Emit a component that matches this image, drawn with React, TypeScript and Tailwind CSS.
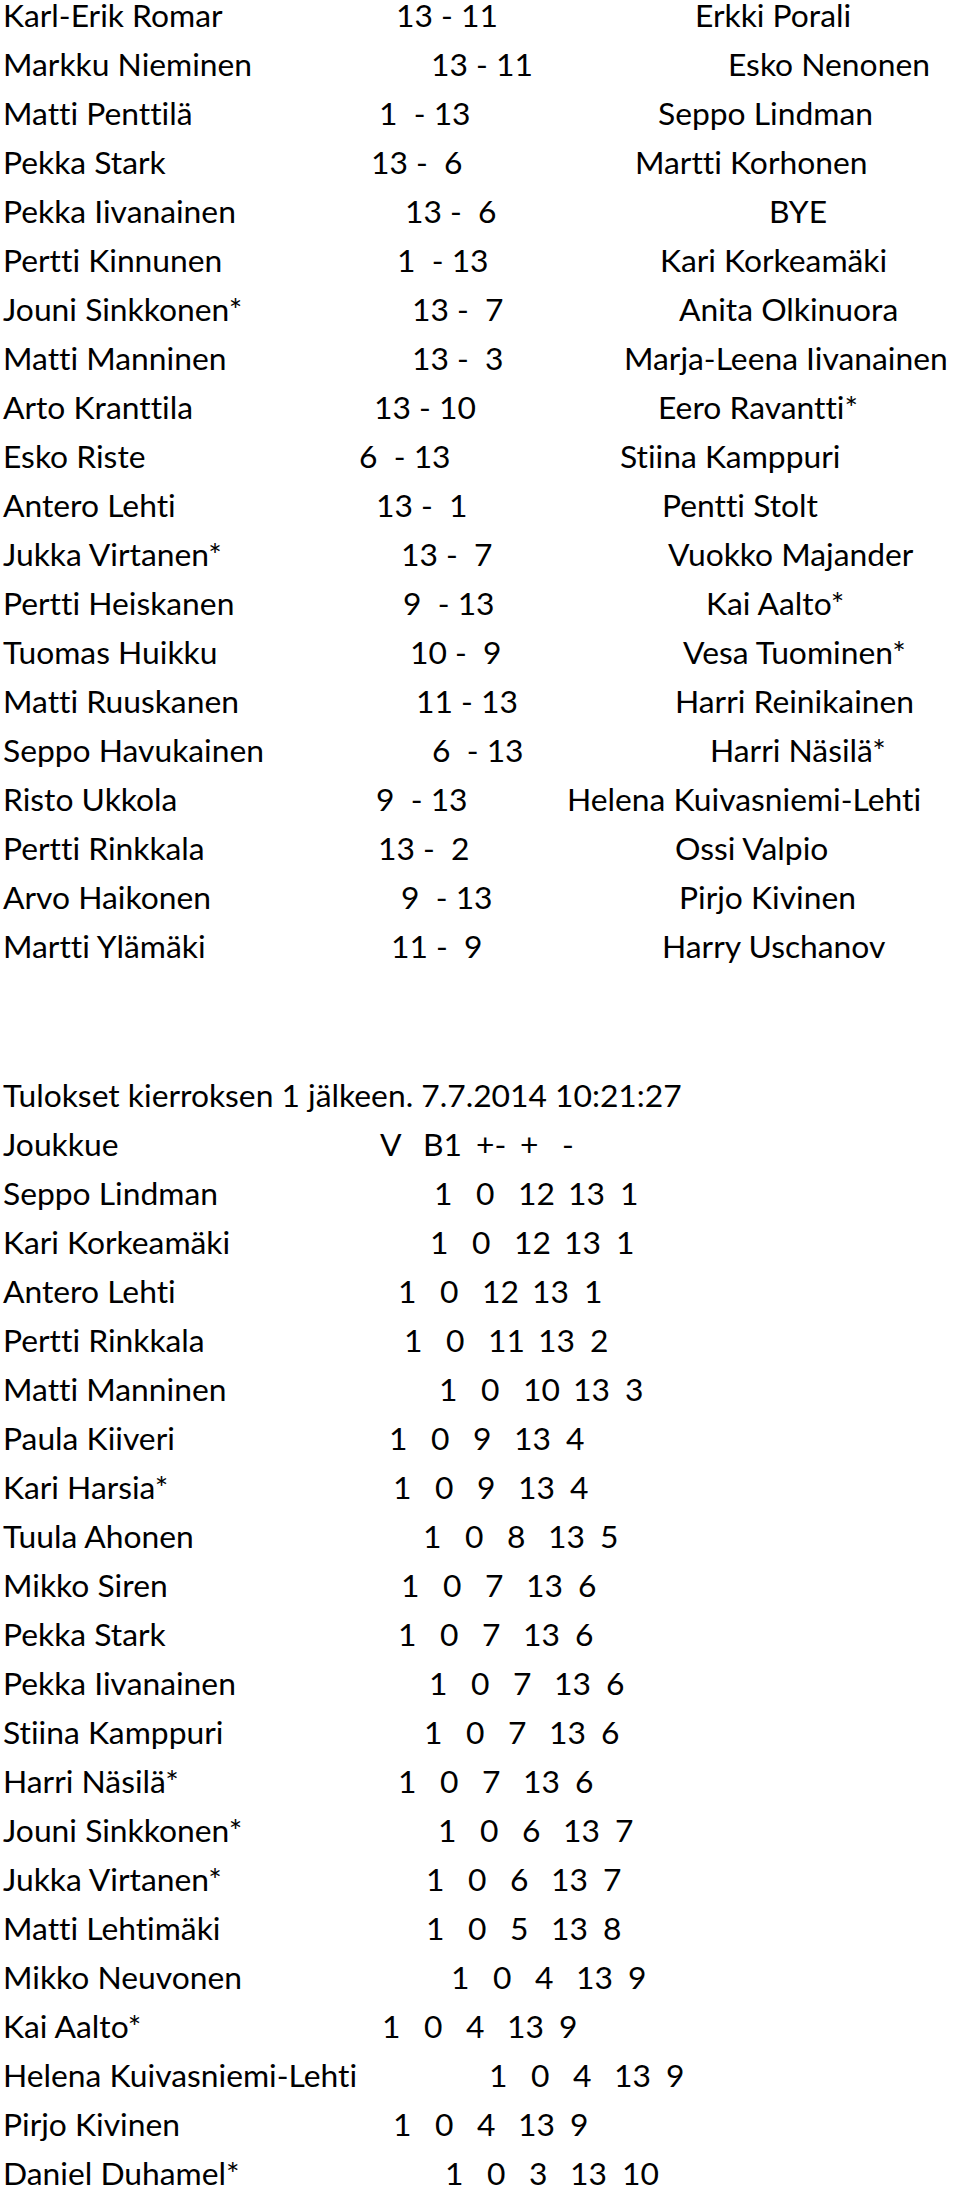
import React from "react";

type TopRow = { l: string; s: string; r: string; a: string; b: string };

const top: TopRow[] = [
  { l: "Karl-Erik Romar", s: "13 - 11", r: "Erkki Porali", a: "w-[396px]", b: "w-[299px]" },
  { l: "Markku Nieminen", s: "13 - 11", r: "Esko Nenonen", a: "w-[431px]", b: "w-[297px]" },
  { l: "Matti Penttilä", s: "1  - 13", r: "Seppo Lindman", a: "w-[379px]", b: "w-[279px]" },
  { l: "Pekka Stark", s: "13 -  6", r: "Martti Korhonen", a: "w-[371px]", b: "w-[264px]" },
  { l: "Pekka Iivanainen", s: "13 -  6", r: "BYE", a: "w-[405px]", b: "w-[364px]" },
  { l: "Pertti Kinnunen", s: "1  - 13", r: "Kari Korkeamäki", a: "w-[397px]", b: "w-[263px]" },
  { l: "Jouni Sinkkonen*", s: "13 -  7", r: "Anita Olkinuora", a: "w-[412px]", b: "w-[267px]" },
  { l: "Matti Manninen", s: "13 -  3", r: "Marja-Leena Iivanainen", a: "w-[412px]", b: "w-[212px]" },
  { l: "Arto Kranttila", s: "13 - 10", r: "Eero Ravantti*", a: "w-[374px]", b: "w-[284px]" },
  { l: "Esko Riste", s: "6  - 13", r: "Stiina Kamppuri", a: "w-[359px]", b: "w-[261px]" },
  { l: "Antero Lehti", s: "13 -  1", r: "Pentti Stolt", a: "w-[376px]", b: "w-[286px]" },
  { l: "Jukka Virtanen*", s: "13 -  7", r: "Vuokko Majander", a: "w-[401px]", b: "w-[267px]" },
  { l: "Pertti Heiskanen", s: "9  - 13", r: "Kai Aalto*", a: "w-[403px]", b: "w-[303px]" },
  { l: "Tuomas Huikku", s: "10 -  9", r: "Vesa Tuominen*", a: "w-[410px]", b: "w-[273px]" },
  { l: "Matti Ruuskanen", s: "11 - 13", r: "Harri Reinikainen", a: "w-[416px]", b: "w-[259px]" },
  { l: "Seppo Havukainen", s: "6  - 13", r: "Harri Näsilä*", a: "w-[432px]", b: "w-[278px]" },
  { l: "Risto Ukkola", s: "9  - 13", r: "Helena Kuivasniemi-Lehti", a: "w-[376px]", b: "w-[191px]" },
  { l: "Pertti Rinkkala", s: "13 -  2", r: "Ossi Valpio", a: "w-[378px]", b: "w-[297px]" },
  { l: "Arvo Haikonen", s: "9  - 13", r: "Pirjo Kivinen", a: "w-[401px]", b: "w-[278px]" },
  { l: "Martti Ylämäki", s: "11 -  9", r: "Harry Uschanov", a: "w-[391px]", b: "w-[271px]" },
];

type BottomRow = { n: string; v: string[]; a: string };

const bottom: BottomRow[] = [
  { n: "Seppo Lindman", v: ["1", "0", "12", "13", "1"], a: "w-[434px]" },
  { n: "Kari Korkeamäki", v: ["1", "0", "12", "13", "1"], a: "w-[430px]" },
  { n: "Antero Lehti", v: ["1", "0", "12", "13", "1"], a: "w-[398px]" },
  { n: "Pertti Rinkkala", v: ["1", "0", "11", "13", "2"], a: "w-[404px]" },
  { n: "Matti Manninen", v: ["1", "0", "10", "13", "3"], a: "w-[439px]" },
  { n: "Paula Kiiveri", v: ["1", "0", "9", "13", "4"], a: "w-[389px]" },
  { n: "Kari Harsia*", v: ["1", "0", "9", "13", "4"], a: "w-[393px]" },
  { n: "Tuula Ahonen", v: ["1", "0", "8", "13", "5"], a: "w-[423px]" },
  { n: "Mikko Siren", v: ["1", "0", "7", "13", "6"], a: "w-[401px]" },
  { n: "Pekka Stark", v: ["1", "0", "7", "13", "6"], a: "w-[398px]" },
  { n: "Pekka Iivanainen", v: ["1", "0", "7", "13", "6"], a: "w-[429px]" },
  { n: "Stiina Kamppuri", v: ["1", "0", "7", "13", "6"], a: "w-[424px]" },
  { n: "Harri Näsilä*", v: ["1", "0", "7", "13", "6"], a: "w-[398px]" },
  { n: "Jouni Sinkkonen*", v: ["1", "0", "6", "13", "7"], a: "w-[438px]" },
  { n: "Jukka Virtanen*", v: ["1", "0", "6", "13", "7"], a: "w-[426px]" },
  { n: "Matti Lehtimäki", v: ["1", "0", "5", "13", "8"], a: "w-[426px]" },
  { n: "Mikko Neuvonen", v: ["1", "0", "4", "13", "9"], a: "w-[451px]" },
  { n: "Kai Aalto*", v: ["1", "0", "4", "13", "9"], a: "w-[382px]" },
  { n: "Helena Kuivasniemi-Lehti", v: ["1", "0", "4", "13", "9"], a: "w-[489px]" },
  { n: "Pirjo Kivinen", v: ["1", "0", "4", "13", "9"], a: "w-[393px]" },
  { n: "Daniel Duhamel*", v: ["1", "0", "3", "13", "10"], a: "w-[445px]" },
];

const rowCls = "flex h-[49px] shrink-0 leading-[29px] whitespace-pre";

export default function App() {
  return (
    <div className="w-[960px] h-[2195px] overflow-hidden bg-white pt-[1px] text-black [font-family:Lato,sans-serif] [font-variant-ligatures:none] [font-feature-settings:'liga'_0,'clig'_0] text-[31.8px] font-normal">
      <div className="flex flex-col">
        {top.map((r) => (
          <div key={r.l} className={rowCls}>
            <span className={"shrink-0 pl-[3px] " + r.a}>{r.l}</span>
            <span className={"shrink-0 " + r.b}>{r.s}</span>
            <span>{r.r}</span>
          </div>
        ))}
      </div>

      <div className="mt-[100px] flex flex-col">
        <div className={rowCls}>
          <span className="pl-[3px]">Tulokset kierroksen 1 jälkeen. 7.7.2014 10:21:27</span>
        </div>
        <div className={rowCls}>
          <span className="w-[380px] shrink-0 pl-[3px]">Joukkue</span>
          <span className="w-[43px] shrink-0">V</span>
          <span className="w-[53px] shrink-0">B1</span>
          <span className="w-[44px] shrink-0">+-</span>
          <span className="w-[42px] shrink-0">+</span>
          <span>-</span>
        </div>
        {bottom.map((r) => (
          <div key={r.n} className={rowCls + " last:h-[36px]"}>
            <span className={"shrink-0 pl-[3px] " + r.a}>{r.n}</span>
            <span className="w-[42px] shrink-0">{r.v[0]}</span>
            <span className="w-[42px] shrink-0">{r.v[1]}</span>
            <span className={"shrink-0 " + (r.v[2].length === 2 ? "w-[50px]" : "w-[41px]")}>{r.v[2]}</span>
            <span className="w-[52px] shrink-0">{r.v[3]}</span>
            <span>{r.v[4]}</span>
          </div>
        ))}
      </div>
    </div>
  );
}
